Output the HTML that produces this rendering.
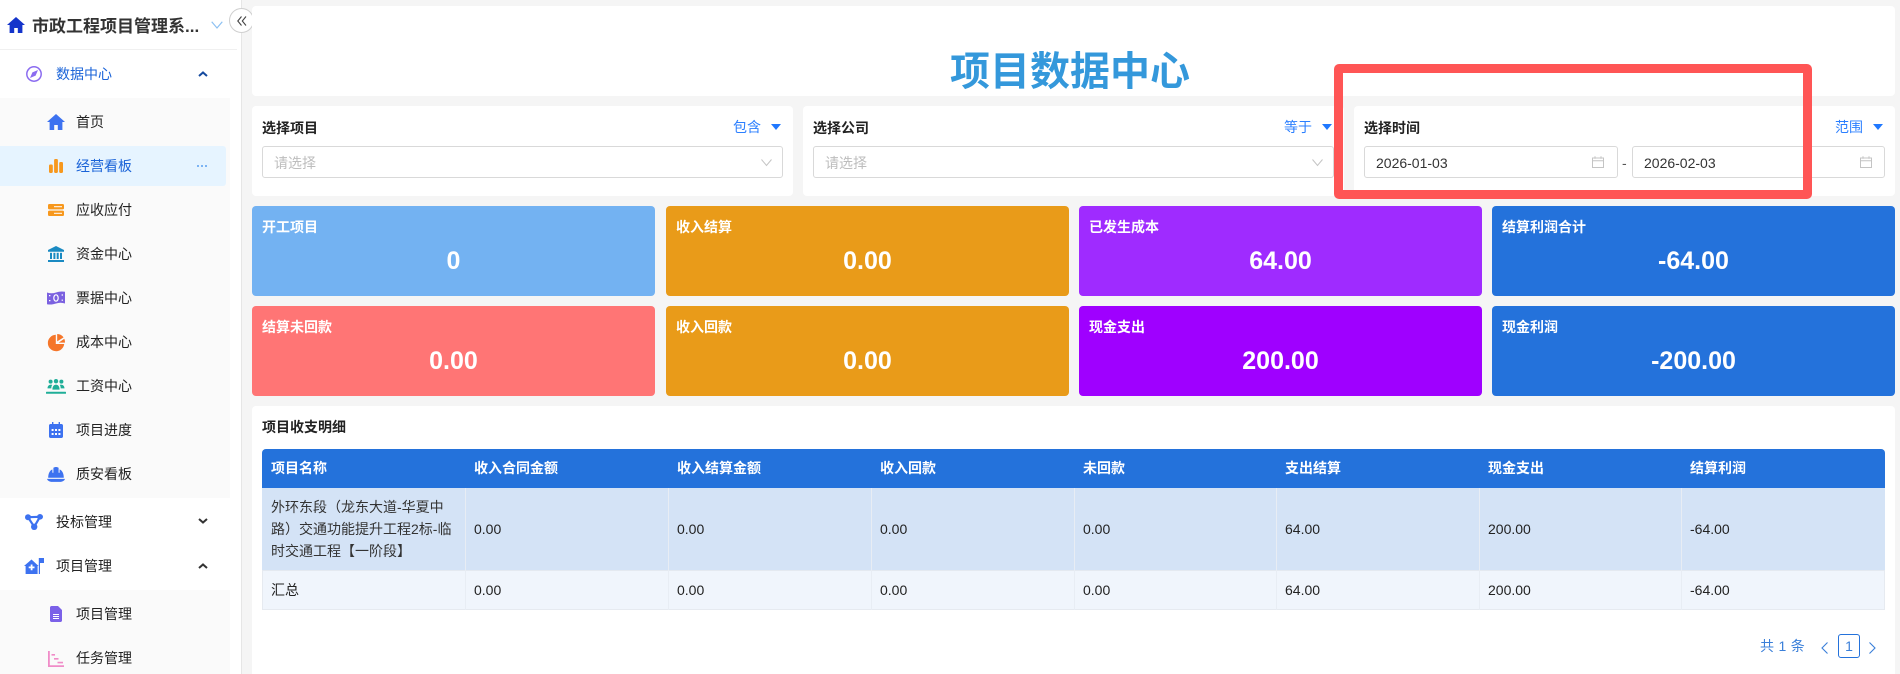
<!DOCTYPE html>
<html lang="zh-CN">
<head>
<meta charset="utf-8">
<title>项目数据中心</title>
<style>
*{box-sizing:border-box;margin:0;padding:0}
html,body{width:1900px;height:674px;overflow:hidden;background:#f5f5f5;font-family:"Liberation Sans","Noto Sans CJK SC",sans-serif;font-size:14px;color:#222}
.a{position:absolute}
svg{position:absolute;display:block;overflow:visible}
#side{left:0;top:0;width:242px;height:674px;background:#fff;border-right:1px solid #e6e6e6}
.t{position:absolute;line-height:20px;white-space:nowrap}
.card{position:absolute;background:#fff;border-radius:4px}
.lab{position:absolute;left:10px;top:12px;font-weight:700;line-height:20px;color:#222}
.op{position:absolute;top:11px;line-height:20px;color:#2b7fff}
.caret{position:absolute;width:0;height:0;border-left:5px solid transparent;border-right:5px solid transparent;border-top:6px solid #1f78ff}
.inp{position:absolute;top:40px;height:32px;border:1px solid #d9d9d9;border-radius:3px;background:#fff;line-height:32px;padding-left:11px;color:#bdbdbd}
.stat{position:absolute;width:403px;height:90px;border-radius:4px;color:#fff}
.stat b{position:absolute;left:10px;top:11px;line-height:20px;font-weight:700}
.stat i{position:absolute;left:0;right:0;top:39px;text-align:center;font-style:normal;font-weight:700;font-size:25px;line-height:32px}
.c{position:absolute;width:203px;padding-left:9px;line-height:22px}
.h{color:#fff;font-weight:700;top:8px}
.vl{position:absolute;width:1px}
</style>
</head>
<body>
<div id="side" class="a"></div>

<!-- header -->
<svg style="left:7px;top:17px" width="18" height="16" viewBox="0 0 18 16"><path d="M9 0 0 8h2.600v8h4.600v-5h3.600v5h4.600V8H18z" fill="#1434cb"/></svg>
<div class="t" style="left:32px;top:16px;font-size:17px;font-weight:700;color:#333;line-height:22px">市政工程项目管理系...</div>
<svg style="left:211px;top:21px" width="12" height="8" viewBox="0 0 12 8"><path d="M.7.7 6 7l5.300-6.300" fill="none" stroke="#8cc0f2" stroke-width="1.200"/></svg>
<div class="a" style="left:0;top:49px;width:237px;height:1px;background:#f0f0f0"></div>
<div class="a" style="left:229px;top:8px;width:25px;height:25px;border-radius:50%;background:#fff;border:1px solid #cfcfcf"></div>
<svg style="left:237px;top:16px" width="10" height="10" viewBox="0 0 10 10"><path d="M4.500.5.800 5l3.700 4.500M9 .5 5.300 5 9 9.500" fill="none" stroke="#444" stroke-width="1.100"/></svg>

<!-- menu level 1 -->
<svg style="left:26px;top:66px" width="16" height="16" viewBox="0 0 16 16"><circle cx="8" cy="8" r="7.200" fill="none" stroke="#8b6cf0" stroke-width="1.500"/><path d="M12 4 9.600 9.600 4 12 6.400 6.400z" fill="#8b6cf0"/></svg>
<div class="t" style="left:56px;top:64px;color:#1a63d8">数据中心</div>
<svg style="left:198px;top:71px" width="10" height="6" viewBox="0 0 10 6"><path d="M1 5 5 1.500 9 5" fill="none" stroke="#154a9e" stroke-width="2"/></svg>

<div class="a" style="left:0;top:98px;width:230px;height:400px;background:#fafafa"></div>
<div class="a" style="left:0;top:146px;width:226px;height:40px;background:#e6f4ff;border-radius:0 3px 3px 0"></div>

<!-- 首页 -->
<svg style="left:47px;top:114px" width="18" height="16" viewBox="0 0 18 16"><path d="M9 0 0 8h2.600v8h4.600v-5h3.600v5h4.600V8H18z" fill="#3d72f0"/></svg>
<div class="t" style="left:76px;top:112px">首页</div>
<!-- 经营看板 -->
<svg style="left:49px;top:159px" width="14" height="14" viewBox="0 0 14 14" fill="#f7981d"><rect x="0" y="5.500" width="3.800" height="8.500" rx="1.200"/><rect x="5.100" y="0" width="3.800" height="14" rx="1.200"/><rect x="10.200" y="3" width="3.800" height="11" rx="1.200"/></svg>
<div class="t" style="left:76px;top:156px;color:#1a63d8">经营看板</div>
<div class="a" style="left:197px;top:165px;width:2px;height:2px;border-radius:50%;background:#5b9ff0"></div>
<div class="a" style="left:201px;top:165px;width:2px;height:2px;border-radius:50%;background:#5b9ff0"></div>
<div class="a" style="left:205px;top:165px;width:2px;height:2px;border-radius:50%;background:#5b9ff0"></div>
<!-- 应收应付 -->
<svg style="left:48px;top:204px" width="16" height="12" viewBox="0 0 16 12" fill="#f7981d"><rect width="16" height="5.400" rx="1.400"/><rect y="6.600" width="16" height="5.400" rx="1.400"/><rect x="6" y="2.200" width="8" height="1" fill="#fff"/><rect x="6" y="8.800" width="8" height="1" fill="#fff"/></svg>
<div class="t" style="left:76px;top:200px">应收应付</div>
<!-- 资金中心 -->
<svg style="left:48px;top:246px" width="16" height="16" viewBox="0 0 16 16" fill="#1a8ac2"><path d="M8 0 0 4v1.800h16V4z"/><rect x="2" y="6.800" width="2" height="6.200"/><rect x="5.400" y="6.800" width="2" height="6.200"/><rect x="8.700" y="6.800" width="2" height="6.200"/><rect x="12" y="6.800" width="2" height="6.200"/><rect y="14" width="16" height="2"/></svg>
<div class="t" style="left:76px;top:244px">资金中心</div>
<!-- 票据中心 -->
<svg style="left:47px;top:291px" width="18" height="14" viewBox="0 0 18 14"><path d="M0 1.500C3 2.500 6 2.500 9 1.500S15 .2 18 .8V12.500c-3-1-6-1-9 0s-6 1.300-9 .7z" fill="#7b61e0"/><ellipse cx="9" cy="7" rx="2.200" ry="3.200" fill="none" stroke="#fff" stroke-width="1.200"/><path d="M2 4h1.400v1.200H2zM2 9h1.400v1.200H2zM14.600 3.400H16v1.200h-1.400zM14.600 8.600H16v1.200h-1.400z" fill="#fff"/></svg>
<div class="t" style="left:76px;top:288px">票据中心</div>
<!-- 成本中心 -->
<svg style="left:48px;top:334px" width="17" height="17" viewBox="0 0 17 17" fill="#f5762a"><path d="M7.800.8A8.200 8.200 0 1 0 16.200 10H7.800z"/><path d="M9.200 0a8.200 8.200 0 0 1 6.400 3.400L9.200 7.400z"/><path d="M16.300 4.800a8.200 8.200 0 0 1 .7 3.800h-6.300z"/></svg>
<div class="t" style="left:76px;top:332px">成本中心</div>
<!-- 工资中心 -->
<svg style="left:46px;top:379px" width="20" height="15" viewBox="0 0 20 15" fill="#1fae98"><circle cx="4.600" cy="2.600" r="2"/><circle cx="10" cy="2.200" r="2.200"/><circle cx="15.400" cy="2.600" r="2"/><path d="M1.500 9.400C1.500 7 3 5.600 5 5.600c.6 0 1 .1 1.300.3-.7.8-1 1.900-1 3.500zM18.500 9.400c0-2.400-1.500-3.800-3.500-3.800-.6 0-1 .1-1.300.3.7.8 1 1.900 1 3.500zM6.400 10.600c0-3 1.400-5 3.600-5s3.600 2 3.600 5z"/><rect y="12.800" width="20" height="2" rx=".6"/></svg>
<div class="t" style="left:76px;top:376px">工资中心</div>
<!-- 项目进度 -->
<svg style="left:49px;top:422px" width="14" height="16" viewBox="0 0 14 16"><path d="M3 0h1.400v2H9.600V0H11v2h1.500C13.300 2 14 2.700 14 3.500v11c0 .8-.7 1.500-1.500 1.500h-11C.7 16 0 15.300 0 14.500v-11C0 2.700.7 2 1.500 2H3z" fill="#3d72f0"/><path d="M2.600 7h2v2h-2zM6 7h2v2H6zM9.400 7h2v2h-2zM2.600 11h2v2h-2zM6 11h2v2H6zM9.400 11h2v2h-2z" fill="#fff"/></svg>
<div class="t" style="left:76px;top:420px">项目进度</div>
<!-- 质安看板 -->
<svg style="left:47px;top:467px" width="18" height="15" viewBox="0 0 18 15" fill="#3d72f0"><path d="M1.200 10.800C1.200 6.500 2.800 3.400 5.400 2.400v3.400h1V.8C7.600.2 8.400 0 9 0s1.400.2 2.600.8v5h1V2.400c2.600 1 4.200 4.100 4.200 8.400z"/><path d="M0 11.900h18C17.500 13.700 15.500 14.900 13 14.900H5C2.500 14.900 .5 13.700 0 11.900z"/></svg>
<div class="t" style="left:76px;top:464px">质安看板</div>

<!-- 投标管理 -->
<svg style="left:25px;top:514px" width="18" height="16" viewBox="0 0 18 16"><path d="M3 3.200 9.200 12.800 M15 2.800 9.200 12.800M3 3.200 15 2.800" fill="none" stroke="#3d72f0" stroke-width="2.200"/><ellipse cx="3" cy="3.200" rx="3" ry="3" fill="#3d72f0"/><ellipse cx="15" cy="2.800" rx="3" ry="2.800" fill="#3d72f0"/><circle cx="9.200" cy="12.800" r="3.200" fill="#3d72f0"/></svg>
<div class="t" style="left:56px;top:512px">投标管理</div>
<svg style="left:198px;top:518px" width="10" height="6" viewBox="0 0 10 6"><path d="M1 1 5 4.500 9 1" fill="none" stroke="#333" stroke-width="2"/></svg>
<!-- 项目管理 -->
<svg style="left:24px;top:558px" width="20" height="16" viewBox="0 0 20 16"><path d="M7.500 1.500 0 8h1.600v8h12V8h1L7.500 1.500z" fill="#3d72f0"/><path d="M6.700 6.500h1.800v2h2v1.800h-2v2H6.700v-2h-2V8.500h2z" fill="#fff"/><path d="M14.800 0h1.200v16h-1.200zM16 0h4v5h-4z" fill="#3d72f0"/></svg>
<div class="t" style="left:56px;top:556px">项目管理</div>
<svg style="left:198px;top:563px" width="10" height="6" viewBox="0 0 10 6"><path d="M1 5 5 1.500 9 5" fill="none" stroke="#333" stroke-width="2"/></svg>

<div class="a" style="left:0;top:590px;width:230px;height:84px;background:#fafafa"></div>
<svg style="left:50px;top:606px" width="12" height="16" viewBox="0 0 12 16"><path d="M1.500 0H8l4 4v10.500c0 .8-.7 1.500-1.500 1.500h-9C.7 16 0 15.300 0 14.500v-13C0 .7.700 0 1.500 0z" fill="#7b61e8"/><path d="M3 8h6v1H3zM3 10h6v1H3zM3 12h6v1H3z" fill="#fff"/></svg>
<div class="t" style="left:76px;top:604px">项目管理</div>
<svg style="left:48px;top:651px" width="16" height="16" viewBox="0 0 16 16" fill="#f08cc8"><path d="M0 0h1.800v14.200H16V16H0z"/><path d="M3.500 3h3.500v1.600H3.500zM6 7h4.500v1.600H6zM9.500 10.800H15v1.600H9.500z"/></svg>
<div class="t" style="left:76px;top:648px">任务管理</div>

<!-- title card -->
<div class="card" style="left:252px;top:6px;width:1643px;height:90px"></div>
<div class="t" style="left:950px;top:46px;width:240px;text-align:center;font-size:40px;line-height:52px;font-weight:700;color:#3498db">项目数据中心</div>

<!-- filters -->
<div class="card" style="left:252px;top:106px;width:541px;height:90px">
  <div class="lab">选择项目</div><div class="op" style="left:481px">包含</div><div class="caret" style="left:519px;top:18px"></div>
  <div class="inp" style="left:10px;width:521px">请选择</div>
  <svg style="left:509px;top:53px" width="11" height="7" viewBox="0 0 11 7"><path d="M.5.5 5.500 6.500 10.500.5" fill="none" stroke="#c4c4c4" stroke-width="1"/></svg>
</div>
<div class="card" style="left:803px;top:106px;width:541px;height:90px">
  <div class="lab">选择公司</div><div class="op" style="left:481px">等于</div><div class="caret" style="left:519px;top:18px"></div>
  <div class="inp" style="left:10px;width:521px">请选择</div>
  <svg style="left:509px;top:53px" width="11" height="7" viewBox="0 0 11 7"><path d="M.5.5 5.500 6.500 10.500.5" fill="none" stroke="#c4c4c4" stroke-width="1"/></svg>
</div>
<div class="card" style="left:1354px;top:106px;width:541px;height:90px">
  <div class="lab">选择时间</div><div class="op" style="left:481px">范围</div><div class="caret" style="left:519px;top:18px"></div>
  <div class="inp" style="left:10px;width:254px;color:#333">2026-01-03</div>
  <svg style="left:238px;top:50px" width="12" height="12" viewBox="0 0 12 12"><path d="M.5 2h11v9.500H.5zM.5 4.800h11M3 .2v2.500M9 .2v2.500" fill="none" stroke="#c4c4c4" stroke-width="1"/></svg>
  <div class="t" style="left:268px;top:47px;color:#555">-</div>
  <div class="inp" style="left:278px;width:253px;color:#333">2026-02-03</div>
  <svg style="left:506px;top:50px" width="12" height="12" viewBox="0 0 12 12"><path d="M.5 2h11v9.500H.5zM.5 4.800h11M3 .2v2.500M9 .2v2.500" fill="none" stroke="#c4c4c4" stroke-width="1"/></svg>
</div>

<!-- red highlight -->
<div class="a" style="left:1334px;top:64px;width:478px;height:135px;border:9px solid #ff5555;border-radius:5px"></div>

<!-- stats -->
<div class="stat" style="left:252px;top:206px;background:#73b2f2"><b>开工项目</b><i>0</i></div>
<div class="stat" style="left:666px;top:206px;background:#e99b19"><b>收入结算</b><i>0.00</i></div>
<div class="stat" style="left:1079px;top:206px;background:#9f2bff"><b>已发生成本</b><i>64.00</i></div>
<div class="stat" style="left:1492px;top:206px;background:#2472db"><b>结算利润合计</b><i>-64.00</i></div>
<div class="stat" style="left:252px;top:306px;background:#ff7575"><b>结算未回款</b><i>0.00</i></div>
<div class="stat" style="left:666px;top:306px;background:#e99b19"><b>收入回款</b><i>0.00</i></div>
<div class="stat" style="left:1079px;top:306px;background:#9f00ff"><b>现金支出</b><i>200.00</i></div>
<div class="stat" style="left:1492px;top:306px;background:#2472db"><b>现金利润</b><i>-200.00</i></div>

<!-- table card -->
<div class="card" style="left:252px;top:406px;width:1643px;height:268px;border-radius:4px 4px 0 0"></div>
<div class="t" style="left:262px;top:417px;font-weight:700;color:#222">项目收支明细</div>

<div class="a" style="left:262px;top:449px;width:1623px;height:161px;overflow:hidden;border-radius:4px 4px 0 0;background:#f0f5fc">
  <div class="a" style="left:0;top:0;width:100%;height:39px;background:#2472db"></div>
  <div class="a" style="left:0;top:39px;width:100%;height:82px;background:#d4e3f6"></div>
  <div class="a" style="left:0;top:121px;width:100%;height:1px;background:#e4e9f0"></div>
  <div class="a" style="left:0;top:160px;width:100%;height:1px;background:#e6eaf0"></div>
  <div class="a" style="left:0;top:122px;width:1px;height:39px;background:#e6eaf0"></div>
  <div class="a" style="right:0;top:122px;width:1px;height:39px;background:#e6eaf0"></div>

  <div class="vl" style="left:203px;top:39px;height:122px;background:#e8edf4"></div>
  <div class="vl" style="left:406px;top:39px;height:122px;background:#e8edf4"></div>
  <div class="vl" style="left:609px;top:39px;height:122px;background:#e8edf4"></div>
  <div class="vl" style="left:812px;top:39px;height:122px;background:#e8edf4"></div>
  <div class="vl" style="left:1014px;top:39px;height:122px;background:#e8edf4"></div>
  <div class="vl" style="left:1217px;top:39px;height:122px;background:#e8edf4"></div>
  <div class="vl" style="left:1419px;top:39px;height:122px;background:#e8edf4"></div>

  <div class="c h" style="left:0">项目名称</div>
  <div class="c h" style="left:203px">收入合同金额</div>
  <div class="c h" style="left:406px">收入结算金额</div>
  <div class="c h" style="left:609px">收入回款</div>
  <div class="c h" style="left:812px">未回款</div>
  <div class="c h" style="left:1014px">支出结算</div>
  <div class="c h" style="left:1217px">现金支出</div>
  <div class="c h" style="left:1419px">结算利润</div>

  <div class="c" style="left:0;top:47px;width:195px;color:#333">外环东段（龙东大道-华夏中路）交通功能提升工程2标-临时交通工程【一阶段】</div>
  <div class="c" style="left:203px;top:69px">0.00</div>
  <div class="c" style="left:406px;top:69px">0.00</div>
  <div class="c" style="left:609px;top:69px">0.00</div>
  <div class="c" style="left:812px;top:69px">0.00</div>
  <div class="c" style="left:1014px;top:69px">64.00</div>
  <div class="c" style="left:1217px;top:69px">200.00</div>
  <div class="c" style="left:1419px;top:69px">-64.00</div>

  <div class="c" style="left:0;top:130px">汇总</div>
  <div class="c" style="left:203px;top:130px">0.00</div>
  <div class="c" style="left:406px;top:130px">0.00</div>
  <div class="c" style="left:609px;top:130px">0.00</div>
  <div class="c" style="left:812px;top:130px">0.00</div>
  <div class="c" style="left:1014px;top:130px">64.00</div>
  <div class="c" style="left:1217px;top:130px">200.00</div>
  <div class="c" style="left:1419px;top:130px">-64.00</div>
</div>

<!-- pagination -->
<div class="t" style="left:1760px;top:636px;color:#3a7fd9;letter-spacing:.3px">共 1 条</div>
<svg style="left:1821px;top:642px" width="7" height="12" viewBox="0 0 7 12"><path d="M6.500.5 1 6l5.500 5.500" fill="none" stroke="#3a7fd9" stroke-width="1.100"/></svg>
<div class="a" style="left:1838px;top:634px;width:22px;height:24px;border:1px solid #2472db;border-radius:3px;color:#3a7fd9;text-align:center;line-height:22px">1</div>
<svg style="left:1869px;top:642px" width="7" height="12" viewBox="0 0 7 12"><path d="M.5.5 6 6 .5 11.500" fill="none" stroke="#3a7fd9" stroke-width="1.100"/></svg>
</body>
</html>
